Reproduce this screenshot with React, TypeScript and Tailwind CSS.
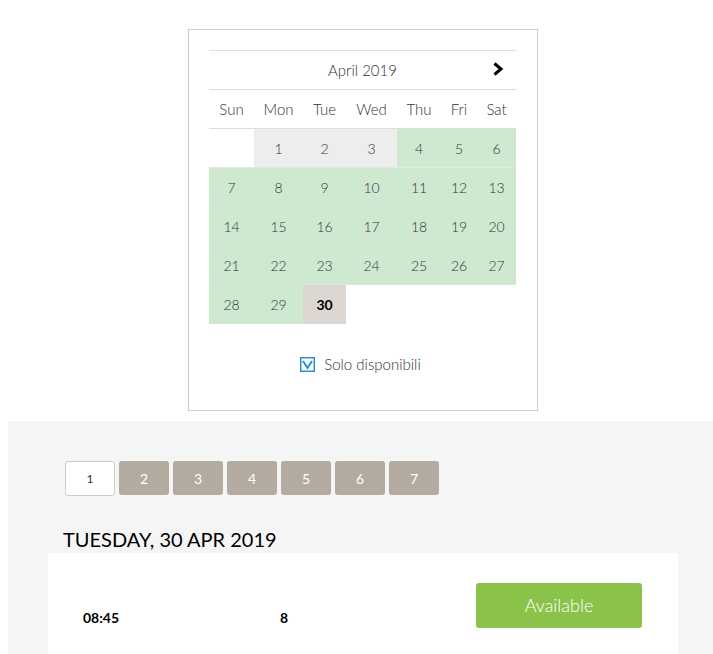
import React from "react";

const cols = [45, 49, 43, 51, 44, 36, 39];
const heads = ["Sun", "Mon", "Tue", "Wed", "Thu", "Fri", "Sat"];
type Cell = { d: number; t: "g" | "n" | "s" } | null;
const rows: Cell[][] = [
  [null, { d: 1, t: "n" }, { d: 2, t: "n" }, { d: 3, t: "n" }, { d: 4, t: "g" }, { d: 5, t: "g" }, { d: 6, t: "g" }],
  [7, 8, 9, 10, 11, 12, 13].map((d) => ({ d, t: "g" as const })),
  [14, 15, 16, 17, 18, 19, 20].map((d) => ({ d, t: "g" as const })),
  [21, 22, 23, 24, 25, 26, 27].map((d) => ({ d, t: "g" as const })),
  [{ d: 28, t: "g" }, { d: 29, t: "g" }, { d: 30, t: "s" }, null, null, null, null],
];

export default function App() {
  return (
    <div className="min-h-[654px] bg-white text-[#333]" style={{ fontFamily: "Lato, 'Open Sans', sans-serif" }}>
      <div className="h-[29px]" />
      <div className="ml-[188px] w-[350px] h-[382px] border border-[#cccccc] pt-[20px] pl-[20px]">
        <div className="w-[307px]">
          <div className="h-[40px] border-t border-b border-[#dddddd] flex items-center relative">
            <div className="w-full text-center text-[15px] font-light text-[#333]">April 2019</div>
            <svg className="absolute right-[12px] top-[11px]" width="12" height="14" viewBox="0 0 12 14">
              <path d="M2.5 1.5 L9 7 L2.5 12.5" fill="none" stroke="#000" strokeWidth="3" />
            </svg>
          </div>
          <div className="flex h-[39px] border-b border-[#dddddd]">
            {heads.map((h, i) => (
              <div key={h} style={{ width: cols[i] }} className="flex items-center justify-center text-[15px] font-light text-[#333]">
                {h}
              </div>
            ))}
          </div>
          {rows.map((r, ri) => (
            <div key={ri} className={`flex h-[39px] ${ri < 4 ? "border-b border-[#dde5de]" : ""} ${ri === 0 ? "border-b-[#e6e6e6]" : ""}`}>
              {r.map((c, ci) => (
                <div
                  key={ci}
                  style={{ width: cols[ci] }}
                  className={`flex items-center justify-center text-[14px] ${
                    c === null
                      ? "bg-white"
                      : c.t === "g"
                      ? "bg-[#cfe9d1] font-light text-[#333]"
                      : c.t === "n"
                      ? "bg-[#ededed] font-light text-[#333]"
                      : "bg-[#dcd6d2] font-bold text-black"
                  }`}
                >
                  {c ? c.d : ""}
                </div>
              ))}
            </div>
          ))}
          <div className="mt-[29px] flex items-center justify-center gap-[9px] pr-[4px]">
            <svg width="15" height="15" viewBox="0 0 15 15">
              <rect x="0.75" y="0.75" width="13.5" height="13.5" fill="none" stroke="#2d8fd0" strokeWidth="1.5" />
              <path d="M3 4 L7.5 11 L12 4" fill="none" stroke="#2d8fd0" strokeWidth="2" />
            </svg>
            <span className="text-[15px] font-light text-[#333]">Solo disponibili</span>
          </div>
        </div>
      </div>
      <div className="h-[10px]" />
      <div className="ml-[8px] bg-[#f5f5f5] pt-[40px] h-[233px]">
        <div className="pl-[57px] flex gap-[4px]">
          <div className="w-[50px] h-[35px] bg-white border border-[#cccccc] rounded-[3px] flex items-center justify-center text-[12px] text-[#333]">1</div>
          {[2, 3, 4, 5, 6, 7].map((n) => (
            <div key={n} className="w-[50px] h-[34px] bg-[#b3aaa0] rounded-[3px] flex items-center justify-center text-[14px] text-white">
              {n}
            </div>
          ))}
        </div>
        <div className="pl-[55px] mt-[31px] text-[20px] leading-[24px] text-black font-normal">TUESDAY, 30 APR 2019</div>
        <div className="ml-[40px] w-[630px] mt-[2px] h-[110px] bg-white flex items-start relative">
          <div className="absolute left-[35px] top-[54px] text-[14px] font-bold text-black">08:45</div>
          <div className="absolute left-[232px] top-[54px] text-[14px] font-bold text-black">8</div>
          <div className="absolute left-[428px] top-[30px] w-[166px] h-[45px] bg-[#8bc34a] rounded-[3px] flex items-center justify-center text-[18px] font-light text-white">
            Available
          </div>
        </div>
      </div>
    </div>
  );
}
